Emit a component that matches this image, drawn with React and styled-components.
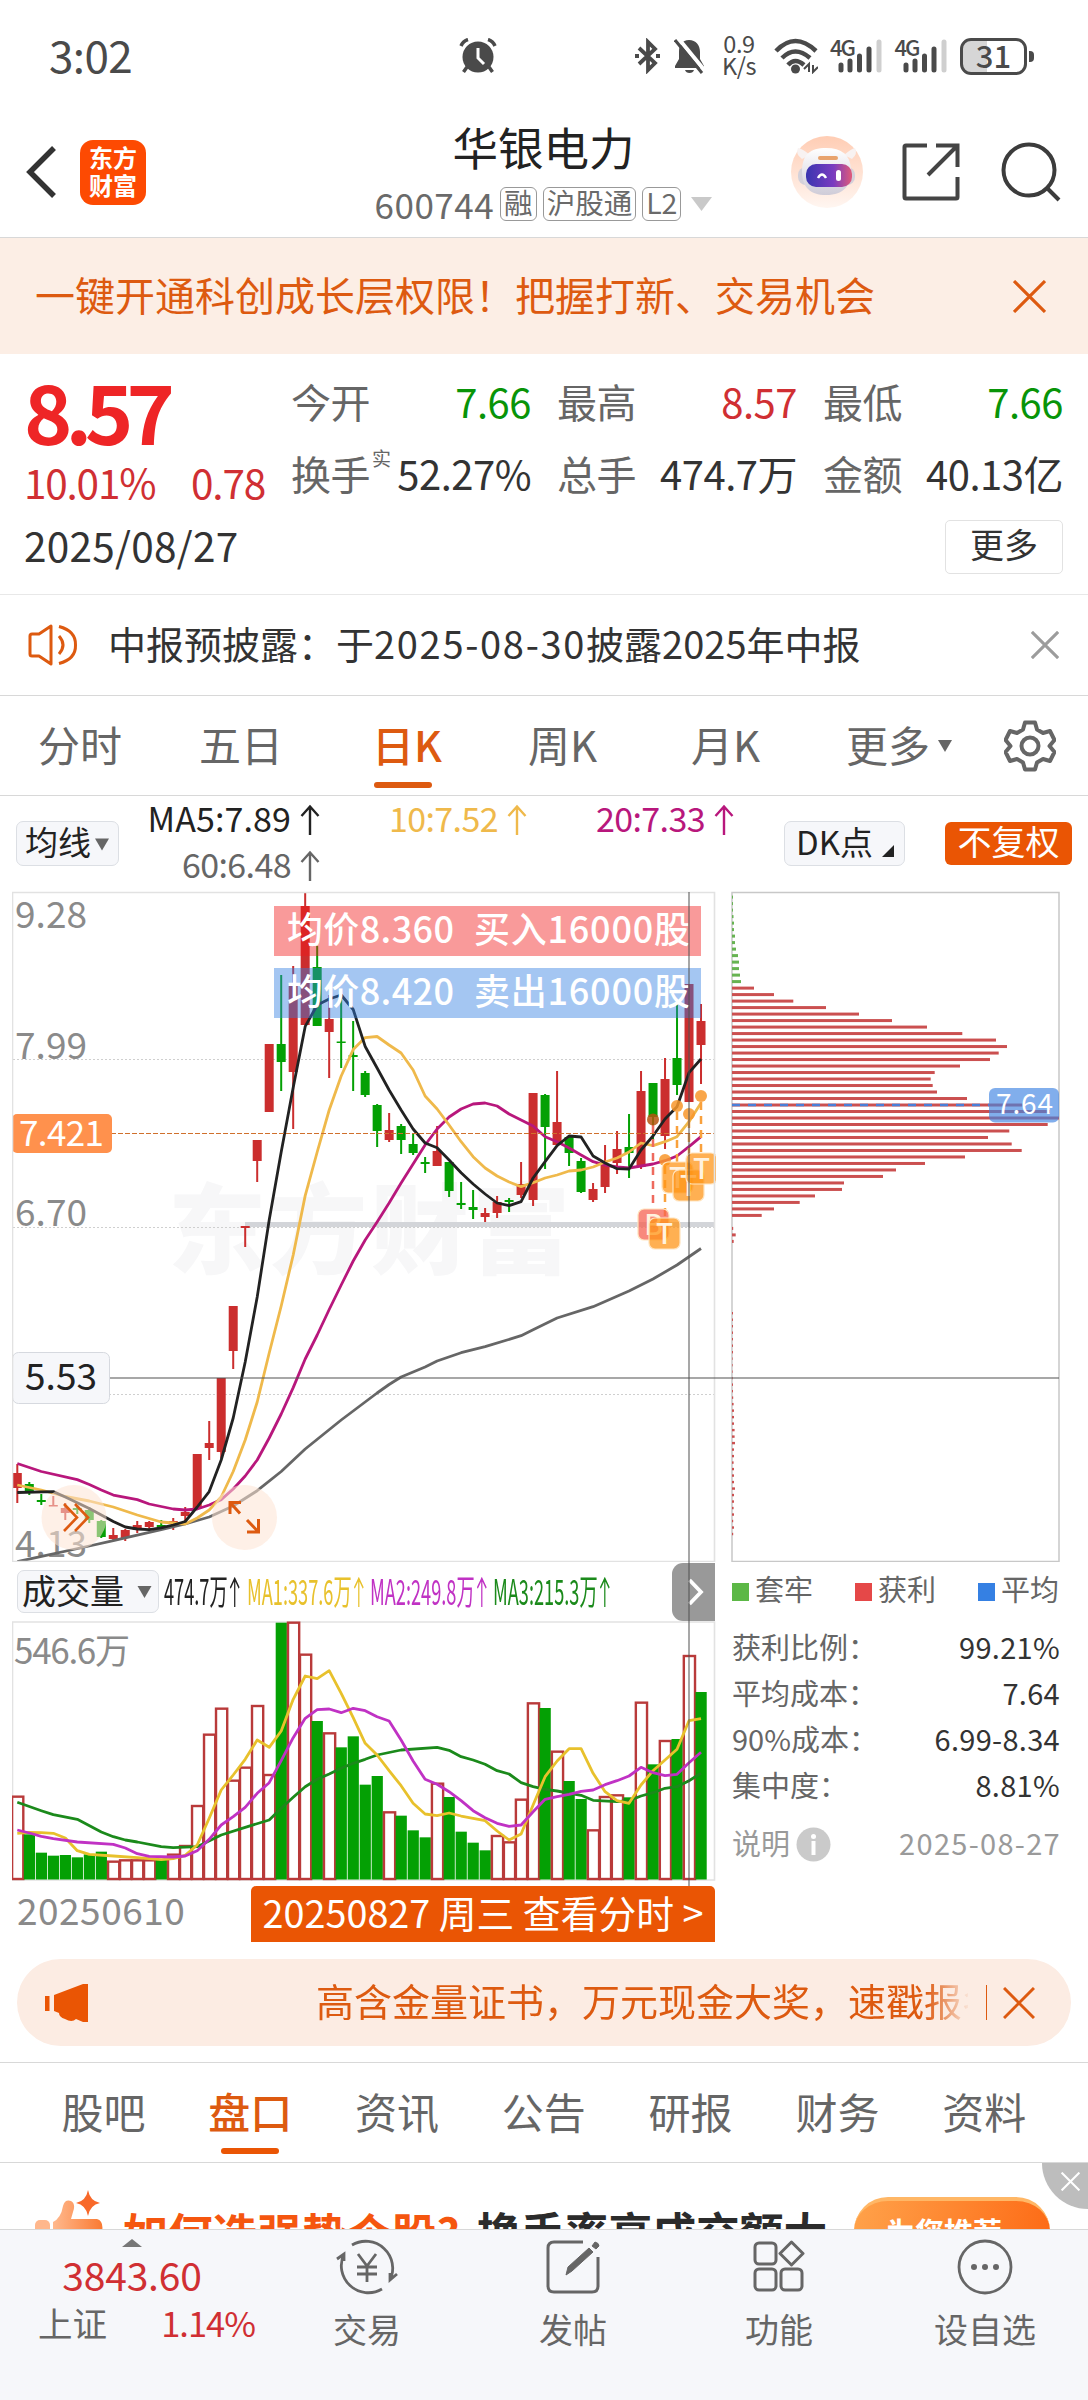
import React from 'react'
import styled, { createGlobalStyle } from 'styled-components'

const X0 = 17.3
const STEP = 11.995
const px = (i) => X0 + STEP * i

// [up/down, high, low, body top, body bottom]
const candles = [
  ['r', 1464, 1503, 1473, 1488], ['g', 1482, 1495, 1484, 1492], ['g', 1494, 1505, 1500, 1502], ['r', 1496, 1506, 1505, 1506.5],
  ['r', 1503, 1520, 1508, 1513], ['g', 1505, 1514, 1508, 1510], ['g', 1507, 1523, 1510, 1520], ['g', 1520, 1538, 1521, 1537],
  ['r', 1528, 1540, 1535, 1539], ['r', 1529, 1541, 1530, 1538], ['r', 1521, 1533, 1525, 1530], ['r', 1521, 1529, 1522, 1527],
  ['g', 1520, 1528, 1525, 1527], ['r', 1518, 1530, 1521, 1523], ['r', 1507, 1521, 1512, 1516], ['r', 1454, 1508, 1454, 1508],
  ['r', 1421, 1460, 1443, 1448], ['r', 1378, 1458, 1378, 1452], ['r', 1306, 1369, 1306, 1351], ['r', 1226, 1247, 1226, 1228],
  ['r', 1140, 1182, 1140, 1161], ['r', 1044, 1112, 1044, 1112], ['g', 975, 1091, 1044, 1062], ['r', 966, 1129, 984, 1072],
  ['r', 892, 1025, 906, 1025], ['g', 946, 1026, 967, 1026], ['r', 995, 1078, 1019, 1032], ['g', 997, 1068, 1041.5, 1043],
  ['g', 1021, 1091, 1055, 1057], ['g', 1071, 1097, 1073, 1095], ['g', 1104, 1147, 1105, 1131], ['r', 1113, 1142, 1130, 1140],
  ['g', 1124, 1154, 1126, 1140], ['g', 1133, 1155, 1144, 1153], ['g', 1157, 1173, 1162, 1164], ['r', 1126, 1166, 1151, 1166],
  ['g', 1162, 1197, 1162, 1191], ['g', 1182, 1209, 1203, 1205], ['g', 1190, 1219, 1207, 1210], ['r', 1208, 1222, 1213, 1217],
  ['r', 1196, 1218, 1202, 1213], ['g', 1198, 1212, 1200, 1202], ['r', 1162, 1198, 1184, 1195], ['r', 1093, 1206, 1093, 1200],
  ['g', 1094, 1169, 1095, 1127], ['r', 1071, 1146, 1122, 1145], ['g', 1137, 1166, 1137, 1153], ['g', 1158, 1193, 1161, 1192],
  ['r', 1183, 1202, 1189, 1200], ['r', 1145, 1193, 1164, 1187], ['r', 1131, 1174, 1149, 1163], ['g', 1114, 1178, 1147, 1153],
  ['r', 1071, 1169, 1091, 1167], ['g', 1083, 1140, 1083, 1117], ['r', 1058, 1149, 1079, 1136], ['g', 1004, 1095, 1058, 1085],
  ['r', 984, 1102, 984, 1102], ['r', 1004, 1084, 1021, 1045],
]

const ma5 = [[0, 1492.5], [3, 1491.6], [4, 1497], [6, 1508.6], [8, 1521.5], [9, 1527], [10, 1529], [11, 1529.6], [12, 1527.8], [13, 1525], [14, 1521.5], [15, 1507], [16, 1491.6], [17, 1460], [18, 1418], [19, 1362], [20, 1297], [21, 1220], [22, 1152], [23, 1087.6], [24, 1026.4], [25, 1005], [26, 999], [27, 995], [28, 1009.5], [29, 1046.5], [30, 1068], [31, 1090], [32, 1110], [33, 1129], [34, 1143], [35, 1147.7], [36, 1160], [37, 1172.7], [38, 1184], [39, 1194], [40, 1203], [41, 1205.7], [42, 1201.7], [43, 1178], [44, 1161.7], [45, 1145.7], [46, 1136], [47, 1137], [48, 1156], [49, 1163], [50, 1168.7], [51, 1169], [52, 1150], [53, 1136], [54, 1119], [55, 1106.7], [56, 1072.7], [57, 1059]]
const ma10 = [[0, 1485], [2, 1490], [4, 1496.5], [6, 1501], [8, 1507], [10, 1515], [12, 1522], [14, 1524], [15, 1518], [16, 1510], [17, 1497], [18, 1471.5], [19, 1440], [20, 1402], [21, 1353], [22, 1306], [23, 1255], [24, 1195.6], [25, 1152], [26, 1110], [27, 1076], [28, 1049.6], [29, 1037.6], [30, 1036.5], [31, 1045], [32, 1053], [33, 1070], [34, 1096], [35, 1109], [36, 1125], [37, 1141.7], [38, 1156.7], [39, 1168], [40, 1176], [41, 1182], [42, 1186.7], [43, 1182.7], [44, 1178], [45, 1175], [46, 1171], [47, 1170], [48, 1167], [49, 1162], [50, 1158], [51, 1152], [52, 1143], [53, 1145.7], [54, 1141.7], [55, 1136.7], [56, 1121.7], [57, 1103]]
const ma20 = [[0, 1463.5], [2, 1471.5], [5, 1479.6], [6, 1484.5], [7, 1490], [8, 1495], [10, 1499.6], [11, 1504], [13, 1509], [14, 1510], [15, 1509], [16, 1505], [17, 1499.6], [18, 1489], [19, 1476], [20, 1460], [21, 1438], [22, 1414], [23, 1387.6], [24, 1359], [25, 1335], [26, 1309.5], [27, 1285], [28, 1261], [29, 1240], [30, 1222], [31, 1203], [32, 1183], [33, 1164], [34, 1145], [35, 1129], [36, 1117], [37, 1109], [38, 1104], [39, 1103], [40, 1106], [41, 1114], [42, 1120], [43, 1126], [44, 1136.7], [45, 1141.7], [46, 1148], [47, 1155], [48, 1161.7], [49, 1165], [50, 1167], [51, 1168], [52, 1166], [53, 1164], [54, 1160.7], [55, 1156], [56, 1146.7], [57, 1136.7]]
const ma60 = [[0, 1561.7], [6, 1546], [8, 1540.7], [12, 1529.6], [14, 1524], [16, 1517], [18, 1506], [20, 1490.7], [22, 1471.5], [24, 1449], [27, 1420], [30, 1393], [31, 1384.5], [32, 1377], [34, 1367], [35, 1361], [37, 1352.7], [39, 1346.7], [42, 1335.7], [43, 1329.7], [45, 1318], [48, 1306.7], [51, 1291], [53, 1279], [55, 1265], [57, 1248.5]]

// bar tops measured from the top of the pane
const volumes = [
  ['r', 710], ['g', 823], ['g', 878], ['g', 887], ['g', 885], ['g', 892], ['g', 883], ['g', 875], ['r', 905], ['r', 901],
  ['r', 901], ['r', 901], ['g', 897], ['r', 884], ['r', 858], ['r', 738], ['r', 524], ['r', 446], ['r', 662], ['r', 623],
  ['r', 438], ['r', 645], ['g', 188], ['r', 188], ['r', 284], ['g', 483], ['r', 520], ['g', 562], ['g', 529], ['g', 674],
  ['g', 648], ['r', 757], ['g', 767], ['g', 811], ['g', 832], ['r', 671], ['g', 711], ['g', 815], ['g', 848], ['g', 871],
  ['r', 828], ['r', 847], ['r', 719], ['r', 430], ['g', 444], ['r', 575], ['g', 663], ['g', 717], ['r', 811], ['r', 711],
  ['r', 706], ['g', 712], ['r', 428], ['g', 613], ['r', 543], ['g', 537], ['r', 288], ['g', 396],
]
const vol1 = [[0, 820], [1, 817], [2, 818], [3, 820], [4, 834], [5, 872], [6, 883], [8, 888], [10, 893], [12, 899], [13, 896], [14, 886], [15, 855], [16, 775], [17, 690], [18, 645], [19, 598], [20, 540], [21, 562], [22, 513], [23, 418], [24, 348], [25, 356], [26, 332], [27, 400], [28, 473], [29, 550], [30, 585], [31, 632], [32, 677], [33, 730], [34, 762], [35, 767], [36, 759], [37, 768], [38, 775], [39, 782], [40, 813], [41, 840], [42, 822], [43, 735], [44, 650], [45, 603], [46, 566], [47, 566], [48, 640], [49, 695], [50, 722], [51, 730], [52, 675], [53, 632], [54, 600], [55, 568], [56, 482], [57, 476]]
const vol2 = [[0, 810], [1, 819], [2, 829], [3, 836], [5, 846], [8, 853], [9, 864], [10, 881], [11, 889], [13, 891], [14, 888], [15, 872], [16, 838], [17, 795], [18, 770], [19, 742], [20, 700], [21, 668], [22, 602], [23, 533], [24, 475], [25, 449], [26, 447], [27, 458], [28, 445], [29, 452], [30, 470], [31, 483], [32, 540], [33, 603], [34, 658], [35, 673], [36, 695], [37, 722], [38, 752], [39, 773], [40, 790], [41, 799], [42, 795], [43, 755], [44, 718], [45, 710], [46, 703], [47, 694], [48, 690], [49, 674], [50, 662], [51, 648], [52, 622], [53, 638], [54, 647], [55, 643], [56, 608], [57, 577]]
const vol3 = [[0, 727], [2, 752], [3, 764], [5, 778], [7, 816], [8, 830], [9, 840], [10, 846], [12, 860], [13, 863], [15, 860], [17, 825], [19, 802], [21, 780], [22, 745], [23, 712], [24, 680], [25, 658], [26, 642], [27, 625], [28, 610], [29, 598], [30, 585], [32, 570], [35, 562], [36, 571], [37, 590], [38, 600], [39, 613], [40, 632], [41, 642], [42, 668], [43, 680], [44, 688], [45, 693], [47, 706], [48, 721], [50, 725], [51, 722], [52, 708], [53, 698], [54, 685], [55, 680], [56, 662], [57, 640]]

const greenChips = [1, 1, 1, 1.5, 2, 2, 3, 3, 4, 6, 7, 7, 8, 9]
const redChips = [22, 42, 61.3, 94, 127, 160, 195, 230.3, 264, 275, 266.7, 258, 228, 202.7, 198.7, 200.7, 205, 235, 293, 318, 327, 315.7, 277.3, 256, 279.7, 289.7, 233, 193, 164, 151, 112, 110, 83, 67.7, 42, 29.7, 0, 1.2, 3.7, 1.7]
const tailChips = [1, 1, 1, 1, 1, 1, 1, 0.6, 0.6, 0.6, 0.6, 1, 1, 1.2, 1.6, 2, 2, 2, 2.6, 2.6, 3, 2, 2, 1.6, 2, 2, 2, 3, 2, 2, 1.6, 2, 1.2, 2, 1.2]

const line = (pts) => pts.map(([i, y]) => `${px(i).toFixed(1)},${y}`).join(' ')
const volY = (p) => 1560 + p / 3
const volLine = (pts) => line(pts.map(([i, p]) => [i, volY(p).toFixed(1)]))

const PriceChart = () => {
  return (
    <svg width="704" height="671" viewBox="12 891 704 671">
      <text x="168" y="1266" fontSize="98" fontWeight="900" textLength="402" fill="#f7f7f8">东方财富</text>
      <g stroke="#cfcfcf" strokeWidth="1" strokeDasharray="2 2">
        <path d="M13 1059.5H714M13 1227.5H714M13 1394.5H714" />
      </g>
      <g fill="#8a8a8a" fontSize="37">
        <text x="15" y="928" textLength="72">9.28</text>
        <text x="15" y="1059" textLength="72">7.99</text>
        <text x="15" y="1226" textLength="72">6.70</text>
        <text x="15" y="1557" textLength="72">4.13</text>
      </g>
      <rect x="245" y="1222" width="469" height="5" fill="#d3d5d9" />
      {candles.map(([c, h, l, t, b], i) => (
        <g key={i} fill={c === 'r' ? '#cb2e2e' : '#04a004'}>
          <rect x={px(i) - 1} y={h} width="2" height={l - h} />
          <rect x={px(i) - 4.5} y={t} width="9" height={b - t} />
        </g>
      ))}
      <g fill="none" strokeWidth="2.8" strokeLinejoin="round">
        <polyline points={line(ma60)} stroke="#666" />
        <polyline points={line(ma20)} stroke="#b8177c" />
        <polyline points={line(ma10)} stroke="#efb94b" />
        <polyline points={line(ma5)} stroke="#222" />
      </g>
      <path d="M13 1133.5H714" stroke="#d0702c" strokeDasharray="5 2" />
      <rect x="12" y="1114" width="100" height="39" rx="5" fill="#ff914d" />
      <text x="19" y="1146" fontSize="35" textLength="85" fill="#fff">7.421</text>
      <rect x="12.5" y="1352.5" width="97" height="51" rx="6" fill="#f6f7fa" stroke="#d6d9df" />
      <text x="25" y="1390" fontSize="37" textLength="72" fill="#222">5.53</text>
      <g>
        <rect x="274" y="906" width="427" height="50" fill="rgba(241,25,25,.44)" />
        <rect x="274" y="968" width="427" height="50" fill="rgba(48,125,225,.44)" />
        <g fill="#fff" fontSize="36" fontWeight="500">
          <text x="287" y="943" textLength="167">均价8.360</text>
          <text x="474" y="943" textLength="216">买入16000股</text>
          <text x="287" y="1005" textLength="167">均价8.420</text>
          <text x="474" y="1005" textLength="216">卖出16000股</text>
        </g>
      </g>
      <g fill="none" strokeWidth="2.5" strokeDasharray="8 6">
        <path d="M653 1125V1208" stroke="#ee6a5e" />
        <path d="M665 1166V1217M677 1112V1162M689 1120V1170M701 1102V1152" stroke="#f9a13c" />
      </g>
      <g fill="#f8962a" fillOpacity=".85">
        <circle cx="653" cy="1119.5" r="6" fill="#b5540f" />
        <circle cx="665" cy="1160" r="6" />
        <circle cx="677" cy="1106" r="6" />
        <circle cx="689" cy="1114" r="6" />
        <circle cx="701" cy="1096" r="6" />
      </g>
      <Mark x={638} y={1209} c="#f5604f" t="B" />
      <Mark x={649} y={1218} c="#ff9416" t="T" />
      <Mark x={662} y={1162} c="#ff9416" t="T" />
      <Mark x={673} y={1170} c="#ff9416" t="T" />
      <Mark x={686} y={1153} c="#ff9416" t="T" />
      <g fill="#fde3d4" fillOpacity=".55">
        <circle cx="74" cy="1517.5" r="32.5" />
        <circle cx="244.5" cy="1517.5" r="32.5" />
      </g>
      <g fill="none" stroke="#dd5a10" strokeWidth="2.6">
        <path d="M64 1504L77 1517.5L64 1531M75 1504L88 1517.5L75 1531" />
        <path d="M241 1502.5H230V1514M231 1503.5L240 1513.5M247 1520L257.5 1531M247 1532H258.5V1519" strokeWidth="3" />
      </g>
      <path d="M12.5 892.5H714.5V1561.5H12.5Z" fill="none" stroke="#e2e2e2" strokeWidth="1.6" />
    </svg>
  )
}

const Mark = ({ x, y, c, t }) => (
  <g>
    <rect x={x} y={y} width="31" height="31" rx="6" fill={c} fillOpacity=".74" stroke="#ffe3bd" strokeWidth="1.2" />
    <text x={x + 15.5} y={y + 26} fontSize="28" fontWeight="500" fill="#fff2df" textAnchor="middle">{t}</text>
  </g>
)

const VolumeChart = () => {
  return (
    <svg width="704" height="260" viewBox="12 1621 704 260">
      <path d="M12.5 1622H714.5V1880H12.5Z" fill="none" stroke="#e2e2e2" strokeWidth="1.6" />
      <text x="14" y="1664" fontSize="35" textLength="116" fill="#8a8a8a">546.6万</text>
      {volumes.map(([c, p], i) =>
        c === 'g' ? (
          <rect key={i} x={px(i) - 5.5} y={volY(p)} width="11.2" height={1879.5 - volY(p)} fill="#04a004" />
        ) : (
          <rect key={i} x={px(i) - 5.2} y={volY(p)} width="11.2" height={1879 - volY(p)} fill="#fff" stroke="#b93a3a" strokeWidth="2.4" />
        )
      )}
      <g fill="none" strokeWidth="2.8" strokeLinejoin="round">
        <polyline points={volLine(vol3)} stroke="#1b8a1b" />
        <polyline points={volLine(vol1)} stroke="#e8c12c" />
        <polyline points={volLine(vol2)} stroke="#c032c4" />
      </g>
    </svg>
  )
}

const ChipChart = () => {
  return (
    <svg width="330" height="671" viewBox="731 891 330 671">
      <path d="M732 892.5H1059V1561.5H732Z" fill="none" stroke="#c8c8c8" strokeWidth="1.5" />
      <g fill="#67b352">
        {greenChips.map((w, i) => <rect key={i} x="732" y={895.6 + i * 6.5} width={w} height="3" />)}
      </g>
      <g fill="#cb5050">
        {redChips.map((w, i) => <rect key={i} x="732" y={986.6 + i * 6.495} width={w} height="3" />)}
        {tailChips.map((w, i) => <rect key={i} x="732" y={1312 + i * 6.495} width={w} height="2.4" />)}
      </g>
      <path d="M732 1105H989" stroke="#4a7fd8" strokeWidth="2.4" strokeDasharray="8 8" />
      <rect x="989" y="1088" width="70" height="34.5" rx="6" fill="rgba(64,132,226,.66)" />
      <text x="996" y="1114" fontSize="28" textLength="57" fill="#fff">7.64</text>
    </svg>
  )
}

const Cross = ({ size, color, w = 3 }) => (
  <svg width={size} height={size} viewBox="0 0 32 32" fill="none" stroke={color} strokeWidth={w}>
    <path d="M1 1L31 31M31 1L1 31" />
  </svg>
)

const Arrow = () => (
  <svg width="20" height="32" viewBox="0 0 20 32" fill="none" stroke="currentColor" strokeWidth="2.4">
    <path d="M10 31V3M1.5 12L10 2.5L18.5 12" />
  </svg>
)

const Tri = ({ w = 14, h = 12 }) => (
  <svg width={w} height={h} viewBox="0 0 14 12"><path d="M0 0H14L7 12Z" fill="#666" /></svg>
)

const Signal = () => (
  <SignalBox>
    <svg width="51" height="36" viewBox="0 0 51 36">
      <g strokeWidth="5" strokeLinecap="round" stroke="#4a4a4a">
        <path d="M10 27V32M19 23V32M28.5 18V32M38 11V32" />
        <path d="M48 4V32" stroke="#cfcfcf" />
      </g>
    </svg>
    <b>4G</b>
  </SignalBox>
)

const StatusBar = () => (
  <Status>
    <Time>3:02</Time>
    <svg width="38" height="36" viewBox="0 0 38 36">
      <circle cx="19" cy="19" r="15.5" fill="#4a4a4a" />
      <path d="M2 8Q4 3 9 1.5M36 8Q34 3 29 1.5M8 29L4.5 34M30 29L33.5 34" stroke="#4a4a4a" strokeWidth="3.5" fill="none" />
      <path d="M19 10V20L25 26" stroke="#fff" strokeWidth="3" fill="none" />
    </svg>
    <StatusRight>
      <svg width="25" height="36" viewBox="0 0 25 36" fill="none" stroke="#4a4a4a" strokeWidth="3.8">
        <path d="M4 10L20 25L13 32V4L20 11L4 26" />
        <path d="M0 18H4M21 18H25" />
      </svg>
      <svg width="31" height="36" viewBox="0 0 31 36">
        <path d="M15 2C22 2 26 7 26 14V21L30 28V30H1V28L5 21V14C5 7 8 2 15 2Z" fill="#4a4a4a" />
        <path d="M11 32H20Q19 35 15.5 35Q12 35 11 32Z" fill="#4a4a4a" />
        <path d="M4 0L31 33" stroke="#fff" strokeWidth="4" />
        <path d="M1 2L28 35" stroke="#4a4a4a" strokeWidth="3" />
      </svg>
      <Speed><span>0.9</span><span>K/s</span></Speed>
      <svg width="44" height="36" viewBox="0 0 44 36" fill="none" stroke="#4a4a4a" strokeWidth="4.5">
        <path d="M2 13Q21 -7 42 13M8 20Q21 7 36 20M14 27Q21 19 30 27" />
        <circle cx="21.5" cy="31" r="4.5" fill="#4a4a4a" stroke="none" />
        <path d="M30 31L35 26V34M44 29L39 34V27" strokeWidth="2" />
      </svg>
      <Signal />
      <Signal />
      <Battery><i>31</i></Battery>
    </StatusRight>
  </Status>
)

const TitleBar = () => (
  <Header>
    <HeaderSide>
      <svg width="30" height="52" viewBox="0 0 30 52" fill="none" stroke="#333" strokeWidth="5.5"><path d="M28 2L4 26L28 50" /></svg>
      <Logo><span>东方</span><span>财富</span></Logo>
    </HeaderSide>
    <TitleBlock>
      <h1>华银电力</h1>
      <CodeRow>
        600744<em>融</em><em>沪股通</em><em>L2</em>
        <svg width="21" height="14" viewBox="0 0 21 14"><path d="M0 0H21L10.5 14Z" fill="#c9c9c9" /></svg>
      </CodeRow>
    </TitleBlock>
    <HeaderSide $end>
      <svg width="74" height="74" viewBox="0 0 74 74">
        <defs>
          <linearGradient id="halo" x1="0" y1="0" x2="0" y2="1"><stop offset="0" stopColor="#ffcdb4" /><stop offset="1" stopColor="#fff6f1" /></linearGradient>
          <linearGradient id="visor" x1="0" y1="0" x2="1" y2="0"><stop offset="0" stopColor="#3a35b0" /><stop offset=".6" stopColor="#7a3cc0" /><stop offset="1" stopColor="#e05a78" /></linearGradient>
          <linearGradient id="shell" x1="0" y1="0" x2="0" y2="1"><stop offset="0" stopColor="#fff" /><stop offset="1" stopColor="#cfccd8" /></linearGradient>
        </defs>
        <circle cx="37" cy="37" r="36" fill="url(#halo)" />
        <path d="M12 24Q5 19 8 13Q13 14 20 20M54 20Q61 14 65 13Q68 19 62 24" fill="#f8f2f1" />
        <rect x="8" y="32" width="57" height="18" rx="8" fill="#d4d1da" />
        <path d="M36 13C52 13 60 20 61 34C62 50 54 60 36 60C20 60 12 52 12 36C12 20 20 13 36 13Z" fill="url(#shell)" />
        <rect x="28" y="21" width="20" height="4" rx="2" fill="#e8a36d" />
        <rect x="16" y="29" width="46" height="23" rx="10" fill="url(#visor)" />
        <path d="M28 43Q32 36 36 43" stroke="#fff" strokeWidth="2.5" fill="none" />
        <rect x="46" y="35" width="5" height="11" rx="2.5" fill="#fff" />
      </svg>
      <svg width="58" height="58" viewBox="0 0 58 58" fill="none" stroke="#444" strokeWidth="4">
        <path d="M25 2.5H4Q2.5 2.5 2.5 4V54Q2.5 55.5 4 55.5H54Q55.5 55.5 55.5 54V34" />
        <path d="M34 2.5H55.5V24M55 3L26 32" />
      </svg>
      <svg width="60" height="60" viewBox="0 0 60 60" fill="none" stroke="#3c3c3c" strokeWidth="4">
        <circle cx="28" cy="28" r="25.5" /><path d="M46 46L58 58" />
      </svg>
    </HeaderSide>
  </Header>
)

const stats = [
  ['今开', '7.66', '#089408'], ['最高', '8.57', '#d02f33'], ['最低', '7.66', '#089408'],
  ['换手', '52.27%'], ['总手', '474.7万'], ['金额', '40.13亿'],
]

const chipRows = [['获利比例：', '99.21%'], ['平均成本：', '7.64'], ['90%成本：', '6.99-8.34'], ['集中度：', '8.81%']]

const infoTabs = ['股吧', '盘口', '资讯', '公告', '研报', '财务', '资料']

const App = () => {
  return (
    <Page>
      <Global />
      <StatusBar />
      <TitleBar />
      <Banner>
        <span>一键开通科创成长层权限！把握打新、交易机会</span>
        <Cross size={33} color="#dd5a10" w={3} />
      </Banner>

      <Quote>
        <QuoteTop>
          <PriceBlock>
            <strong>8.57</strong>
            <div><span>10.01%</span><span>0.78</span></div>
          </PriceBlock>
          <Stats>
            {stats.map(([k, v, c], i) => (
              <Stat key={i} $color={c}>
                <label>{k}{k === '换手' && <sup>实</sup>}</label>
                <span>{v}</span>
              </Stat>
            ))}
          </Stats>
        </QuoteTop>
        <DateRow>
          <span>2025/08/27</span>
          <MoreButton>更多</MoreButton>
        </DateRow>
      </Quote>

      <Notice>
        <svg width="50" height="42" viewBox="0 0 50 42" fill="none" stroke="#dd5a10" strokeWidth="3" strokeLinejoin="round">
          <path d="M2 12Q2 10 4 10H11L23 2V40L11 32H4Q2 32 2 30Z" />
          <path d="M31 12Q39 21 31 30M31 2.5Q48 7 47.5 21Q48 35 31 39.5" />
        </svg>
        <span>中报预披露：于<b>2025-08-30</b>披露2025年中报</span>
        <Cross size={28} color="#9c9c9c" w={3.5} />
      </Notice>

      <PeriodTabs>
        <Period $w={161}>分时</Period>
        <Period $w={161}>五日</Period>
        <Period $w={168} $on>日K</Period>
        <Period $w={163}>周K</Period>
        <Period $w={155}>月K</Period>
        <Period $w={158}>更多<Tri /></Period>
        <svg width="52" height="52" viewBox="0 0 52 52" fill="none" stroke="#666" strokeWidth="4" strokeLinejoin="round">
          <path d="M21 2.5H31L33 9.5L39 13L46 11L50.5 20L45.5 26L50.5 32L46 41L39 39L33 42.5L31 49.5H21L19 42.5L13 39L6 41L1.5 32L6.5 26L1.5 20L6 11L13 13L19 9.5Z" />
          <circle cx="26" cy="26" r="8.5" />
        </svg>
      </PeriodTabs>

      <MaBar>
        <Pill $w={103}>均线<Tri w={14} h={13} /></Pill>
        <MaGrid>
          <Ma $c="#222" $ls={0.1}><span>MA5:7.89</span><Arrow /></Ma>
          <Ma $c="#efb94b"><span>10:7.52</span><Arrow /></Ma>
          <Ma $c="#b8177c"><span>20:7.33</span><Arrow /></Ma>
          <Ma $c="#666"><span>60:6.48</span><Arrow /></Ma>
        </MaGrid>
        <Pill $w={121} $dk>DK点<svg width="12" height="12" viewBox="0 0 12 12"><path d="M12 0V12H0Z" fill="#222" /></svg></Pill>
        <Adjust>不复权</Adjust>
      </MaBar>

      <Charts>
        <LeftPane>
          <PriceChart />
          <VolHead>
            <Pill $w={142} $vol>成交量<Tri w={15} h={12} /></Pill>
            <Narrow $w={75} $c="#222"><span>474.7万<Arrow /></span></Narrow>
            <Narrow $w={115} $c="#e8c12c"><span>MA1:337.6万<Arrow /></span></Narrow>
            <Narrow $w={115} $c="#c032c4"><span>MA2:249.8万<Arrow /></span></Narrow>
            <Narrow $w={115} $c="#1b8a1b"><span>MA3:215.3万<Arrow /></span></Narrow>
            <NextButton>
              <svg width="16" height="28" viewBox="0 0 16 28" fill="none" stroke="#fff" strokeWidth="3.8"><path d="M1.5 2L13 14L1.5 26" /></svg>
            </NextButton>
          </VolHead>
          <VolumeChart />
          <DayRow>
            <span>20250610</span>
            <DayLink>20250827 周三 查看分时 &gt;</DayLink>
          </DayRow>
        </LeftPane>
        <RightPane>
          <ChipChart />
          <Legend>
            <Key $c="#5cb846">套牢</Key>
            <Key $c="#e54848">获利</Key>
            <Key $c="#3580e3">平均</Key>
          </Legend>
          {chipRows.map(([k, v]) => (
            <ChipRow key={k}><span>{k}</span><b>{v}</b></ChipRow>
          ))}
          <ChipNote>
            <span>说明</span>
            <svg width="35" height="35" viewBox="0 0 35 35"><circle cx="17.5" cy="17.5" r="17" fill="#cacaca" /><path d="M17.5 14V28" stroke="#fff" strokeWidth="4" /><circle cx="17.5" cy="9.5" r="2.5" fill="#fff" /></svg>
            <time>2025-08-27</time>
          </ChipNote>
        </RightPane>
        <CrossV />
        <CrossH />
      </Charts>

      <PromoWrap>
        <Promo>
          <svg width="45" height="40" viewBox="0 0 45 40" fill="#ea5504">
            <path d="M0 13H4.5V28H0ZM9 12L38 1H43V39H38L31 36Q27 40 20 36Q14 34 14 30L9 28Z" />
          </svg>
          <span>高含金量证书，万元现金大奖，速戳报名</span>
          <i />
          <Cross size={32} color="#dd5a10" w={3} />
        </Promo>
      </PromoWrap>

      <InfoTabs>
        {infoTabs.map((t, i) => <InfoTab key={t} $on={i === 1}>{t}</InfoTab>)}
      </InfoTabs>

      <Ad>
        <svg width="70" height="42" viewBox="0 0 70 42">
          <defs><linearGradient id="thumb" x1="0" y1="0" x2="1" y2="0"><stop offset="0" stopColor="#ffb98e" /><stop offset="1" stopColor="#fa7a32" /></linearGradient></defs>
          <path d="M18 42V32Q26 28 28 16Q30 9 36 11Q41 14 38 22L36 29H62Q69 31 67 42Z" fill="url(#thumb)" />
          <rect x="0" y="30" width="15" height="14" rx="5" fill="#ffb78c" />
          <path d="M53 0Q55 11 65 13Q55 15 53 26Q51 15 41 13Q51 11 53 0Z" fill="#f8692a" />
        </svg>
        <AdText $c="#f5560f" $s={44.8}>如何选强势个股?</AdText>
        <AdText $c="#2b2b2b" $s={43.8}>换手率高成交额大</AdText>
        <AdButton>为您推荐 ›</AdButton>
        <AdClose><Cross size={19} color="#fff" w={3.5} /></AdClose>
      </Ad>

      <BottomBar>
        <IndexBox>
          <svg width="20" height="8" viewBox="0 0 20 8"><path d="M0 8L10 0L20 8Z" fill="#777" /></svg>
          <b>3843.60</b>
          <div><span>上证</span><em>1.14%</em></div>
        </IndexBox>
        <NavItem>
          <svg width="62" height="56" viewBox="0 0 62 56" fill="none" stroke="#666" strokeWidth="2.8">
            <path d="M16 6A27 27 0 0 1 54 41M54 34V41L61 35" />
            <path d="M46 50A27 27 0 0 1 8 15M8 22V15L1 20" />
            <path d="M22 15L31 27L40 15M31 27V43M21 28H41M21 35H41" />
          </svg>
          <span>交易</span>
        </NavItem>
        <NavItem>
          <svg width="54" height="56" viewBox="0 0 54 56" fill="none" stroke="#666" strokeWidth="3">
            <path d="M37 3H8Q2 3 2 9V47Q2 53 8 53H46Q52 53 52 47V18" />
            <path d="M20 36L22 28L43 9L47 13L26 32Z" fill="#666" strokeWidth="1" />
            <path d="M46 7L49 3Q53 4 53 7L50 10Z" fill="#666" strokeWidth="1" />
          </svg>
          <span>发帖</span>
        </NavItem>
        <NavItem>
          <svg width="52" height="56" viewBox="0 0 52 56" fill="none" stroke="#666" strokeWidth="3">
            <rect x="2" y="4" width="21" height="21" rx="4" /><rect x="2" y="30" width="21" height="21" rx="4" /><rect x="28" y="30" width="21" height="21" rx="4" />
            <path d="M38.5 3L50 14.5L38.5 26L27 14.5Z" strokeLinejoin="round" />
          </svg>
          <span>功能</span>
        </NavItem>
        <NavItem>
          <svg width="56" height="56" viewBox="0 0 56 56">
            <circle cx="28" cy="28" r="26" fill="none" stroke="#666" strokeWidth="2.8" />
            <g fill="#666"><circle cx="17" cy="28" r="3" /><circle cx="28" cy="28" r="3" /><circle cx="39" cy="28" r="3" /></g>
          </svg>
          <span>设自选</span>
        </NavItem>
      </BottomBar>
    </Page>
  )
}

export default App

const Global = createGlobalStyle`
*{
  box-sizing: border-box;
}
body{
  margin: 0;
  background: #fff;
}
h1, b, em, i, label{
  font-weight: 400;
  font-style: normal;
  margin: 0;
}
svg{
  display: block;
  flex-shrink: 0;
}
`
const Page = styled.div`
width: 1088px;
height: 2400px;
overflow: hidden;
display: flex;
flex-direction: column;
font-family: "Noto Sans CJK SC", "Noto Sans", sans-serif;
line-height: 1;
white-space: nowrap;
color: #333;
background: #fff;
`
const Status = styled.div`
height: 112px;
padding: 0 54px 0 49px;
display: flex;
align-items: center;
color: #4a4a4a;
`
const Time = styled.div`
width: 410px;
font-size: 44px;
letter-spacing: -0.6px;
padding-bottom: 4px;
`
const StatusRight = styled.div`
margin-left: auto;
display: flex;
align-items: center;
gap: 13.5px;
`
const Speed = styled.div`
width: 38px;
margin: 0 2px 0 2px;
display: flex;
flex-direction: column;
align-items: center;
font-size: 23.5px;
line-height: 22px;
padding-bottom: 4px;
span{
  letter-spacing: -0.4px;
}
`
const SignalBox = styled.div`
position: relative;
b{
  position: absolute;
  left: -1px;
  top: -3px;
  font-size: 22px;
  letter-spacing: -2px;
  font-weight: 500;
}
`
const Battery = styled.div`
position: relative;
width: 67px;
height: 37px;
margin-right: 7px;
border: 3px solid #4a4a4a;
border-radius: 11px;
display: flex;
justify-content: center;
background: linear-gradient(90deg, #d6d6d6 24px, #fff 24px);
i{
  font-size: 31px;
  font-weight: 500;
  line-height: 27px;
}
&::after{
  content: '';
  position: absolute;
  right: -10px;
  top: 10px;
  width: 5px;
  height: 11px;
  border-radius: 0 4px 4px 0;
  background: #4a4a4a;
}
`
const Header = styled.div`
height: 126px;
padding: 0 27px 0 26px;
display: grid;
grid-template-columns: 1fr auto 1fr;
border-bottom: 1px solid #d8d8d8;
`
const HeaderSide = styled.div`
display: flex;
align-items: center;
gap: ${(p) => (p.$end ? '41px' : '24px')};
justify-content: ${(p) => (p.$end ? 'flex-end' : 'flex-start')};
padding-bottom: 5px;
svg:first-child{
  margin-right: ${(p) => (p.$end ? '-3px' : '0')};
}
`
const Logo = styled.div`
width: 66px;
height: 65px;
border-radius: 13px;
background: #fd4a02;
color: #fff;
display: flex;
flex-direction: column;
align-items: center;
justify-content: center;
font-size: 24px;
font-weight: 700;
line-height: 28px;
padding-bottom: 3px;
`
const TitleBlock = styled.div`
display: flex;
flex-direction: column;
align-items: center;
h1{
  font-size: 45.5px;
  margin-top: 12px;
  color: #222;
}
`
const CodeRow = styled.div`
display: flex;
align-items: center;
margin-top: 16px;
height: 36px;
font-size: 35px;
letter-spacing: 0.5px;
color: #6a6a6a;
em{
  height: 34px;
  margin-left: 6px;
  padding: 0 3px;
  border: 1.5px solid #999;
  border-radius: 6px;
  font-size: 28.5px;
  line-height: 28px;
  letter-spacing: 0;
}
svg{
  margin-left: 10px;
}
`
const Banner = styled.div`
height: 116px;
padding: 0 42px 0 35px;
display: flex;
align-items: center;
justify-content: space-between;
background: #fceee5;
color: #dd5a10;
font-size: 40px;
span{
  padding-bottom: 4px;
}
`
const Quote = styled.div`
height: 241px;
border-bottom: 1px solid #e8e8e8;
padding: 20px 25px 0 24px;
`
const QuoteTop = styled.div`
display: flex;
height: 146px;
`
const PriceBlock = styled.div`
width: 267px;
color: #d02f33;
strong{
  display: block;
  font-size: 82px;
  font-weight: 700;
  letter-spacing: -7px;
  line-height: 82px;
  margin-top: -5px;
  color: #ee2526;
}
div{
  display: flex;
  justify-content: space-between;
  width: 241px;
  margin-top: 11px;
  font-size: 40.5px;
  letter-spacing: -1.2px;
}
`
const Stats = styled.div`
display: grid;
grid-template-columns: 240px 240px 240px;
column-gap: 26px;
grid-auto-rows: 72px;
`
const Stat = styled.div`
display: flex;
justify-content: space-between;
align-items: center;
padding-bottom: 19px;
font-size: 40px;
letter-spacing: -0.5px;
color: ${(p) => p.$color || '#333'};
label{
  display: flex;
  color: #666;
}
sup{
  font-size: 19px;
  line-height: 1;
  margin: -5px -12px 0 2px;
}
`
const DateRow = styled.div`
display: flex;
justify-content: space-between;
align-items: center;
font-size: 40.5px;
height: 53px;
letter-spacing: 0.3px;
span{
  padding-bottom: 3px;
}
`
const MoreButton = styled.button`
width: 118px;
height: 54px;
border: 1.5px solid #e2e2e2;
border-radius: 5px;
background: #fff;
font-family: inherit;
font-size: 34px;
line-height: 1;
color: #333;
padding: 0 0 5px;
`
const Notice = styled.div`
height: 101px;
padding: 0 29px 0 28px;
display: flex;
align-items: center;
border-bottom: 1px solid #d8d8d8;
font-size: 38px;
span{
  margin: 0 auto 4px 30px;
}
b{
  letter-spacing: 1.7px;
}
`
const PeriodTabs = styled.div`
height: 100px;
padding-left: 38px;
display: flex;
align-items: center;
border-bottom: 1px solid #d8d8d8;
color: #666;
`
const Period = styled.div`
position: relative;
width: ${(p) => p.$w}px;
height: 99px;
display: flex;
align-items: center;
font-size: 42px;
padding-bottom: 4px;
color: ${(p) => (p.$on ? '#dd5a10' : 'inherit')};
font-weight: ${(p) => (p.$on ? 500 : 400)};
padding-left: ${(p) => (p.$on ? '12px' : '0')};
svg{
  margin: 4px 0 0 8px;
}
&::after{
  content: '';
  display: ${(p) => (p.$on ? 'block' : 'none')};
  position: absolute;
  left: 14px;
  bottom: 7px;
  width: 58px;
  height: 6px;
  border-radius: 3px;
  background: #dd5a10;
}
`
const MaBar = styled.div`
height: 95px;
padding: 0 16px;
display: flex;
align-items: center;
`
const Pill = styled.div`
width: ${(p) => p.$w}px;
height: ${(p) => (p.$vol ? 43 : 45)}px;
border: 1px solid #dcdfe4;
border-radius: 7px;
background: #f6f7fa;
display: flex;
align-items: center;
padding-left: ${(p) => (p.$vol ? 4 : p.$dk ? 11 : 8)}px;
padding-bottom: 4px;
font-size: ${(p) => (p.$vol ? 34 : 33)}px;
color: #222;
svg{
  margin: ${(p) => (p.$dk ? '18px 0 0 9px' : p.$vol ? '4px 0 0 13px' : '5px 0 0 4px')};
}
`
const MaGrid = styled.div`
width: 615px;
display: grid;
grid-template-columns: 201px 207px 207px;
row-gap: 8px;
margin-right: 50px;
margin-top: -1px;
`
const Ma = styled.div`
display: flex;
justify-content: flex-end;
align-items: center;
gap: 9px;
font-size: 34px;
letter-spacing: ${(p) => p.$ls || -0.6}px;
color: ${(p) => p.$c};
span{
  padding-bottom: 4px;
}
`
const Adjust = styled.div`
width: 127px;
height: 43px;
margin-left: auto;
border-radius: 6px;
background: #ea5504;
color: #fff;
font-size: 34px;
line-height: 38px;
text-align: center;
`
const Charts = styled.div`
position: relative;
display: flex;
gap: 15px;
height: 1059px;
padding-left: 12px;
`
const CrossV = styled.div`
position: absolute;
left: 688px;
top: 1px;
width: 2px;
height: 994px;
background: rgba(80, 80, 80, 0.5);
`
const CrossH = styled.div`
position: absolute;
left: 110px;
top: 486px;
width: 949px;
height: 2px;
background: rgba(80, 80, 80, 0.5);
`
const LeftPane = styled.div`
width: 704px;
`
const VolHead = styled.div`
height: 59px;
padding-left: 5px;
display: flex;
align-items: center;
position: relative;
`
const Narrow = styled.div`
width: ${(p) => p.$w}px;
margin-left: ${(p) => (p.$w < 100 ? 5 : 8)}px;
color: ${(p) => p.$c};
font-size: 35px;
span{
  display: inline-flex;
  align-items: center;
  padding-bottom: 4px;
  transform: scaleX(0.52);
  transform-origin: left center;
}
svg{
  margin: 4px 0 0 4px;
}
`
const NextButton = styled.div`
width: 43px;
height: 58px;
margin-left: auto;
margin-right: 1px;
border-radius: 11px 0 0 11px;
background: #999;
display: flex;
align-items: center;
padding-left: 16px;
`
const DayRow = styled.div`
display: flex;
justify-content: space-between;
padding: 5px 1px 0 5px;
font-size: 37px;
color: #8a8a8a;
span{
  padding-top: 5px;
  letter-spacing: 0.5px;
}
`
const DayLink = styled.div`
width: 464px;
height: 56px;
border-radius: 5px 5px 0 0;
background: #ea5504;
color: #fff;
font-size: 37.8px;
line-height: 51px;
text-align: center;
`
const RightPane = styled.div`
width: 330px;
color: #666;
`
const Legend = styled.div`
display: flex;
justify-content: space-between;
padding: 12px 2px 0 1px;
height: 63px;
`
const Key = styled.div`
display: flex;
align-items: flex-start;
gap: 6px;
font-size: 29px;
&::before{
  content: '';
  width: 17px;
  height: 18px;
  margin-top: 9px;
  background: ${(p) => p.$c};
}
`
const ChipRow = styled.div`
display: flex;
justify-content: space-between;
height: 46px;
padding: 7px 1px 0 1px;
font-size: 29px;
b{
  color: #333;
  letter-spacing: 0.3px;
}
`
const ChipNote = styled.div`
display: flex;
align-items: center;
height: 54px;
margin-top: 8px;
padding: 0 0 0 1px;
font-size: 29px;
color: #9a9a9a;
svg{
  margin-left: 6px;
}
span, time{
  padding-bottom: 4px;
}
time{
  margin-left: auto;
  letter-spacing: 1.3px;
}
`
const PromoWrap = styled.div`
height: 113px;
padding: 9px 17px 0;
border-bottom: 1px solid #d8d8d8;
`
const Promo = styled.div`
height: 87px;
border-radius: 44px;
background: #fcece3;
display: flex;
align-items: center;
padding: 0 36px 0 28px;
color: #dd5a10;
span{
  width: 652px;
  margin-left: 226px;
  margin-bottom: 2px;
  height: 48px;
  line-height: 44px;
  overflow: hidden;
  font-size: 38px;
  mask-image: linear-gradient(90deg, #000 610px, transparent 655px);
}
i{
  width: 1.5px;
  height: 35px;
  margin-left: auto;
  margin-right: 16px;
  background: #dd5a10;
}
`
const InfoTabs = styled.div`
height: 100px;
padding: 0 30px;
display: grid;
grid-template-columns: repeat(7, 146.8px);
border-bottom: 1px solid #d8d8d8;
`
const InfoTab = styled.div`
position: relative;
display: flex;
justify-content: center;
align-items: center;
padding-bottom: 4px;
font-size: 42px;
color: ${(p) => (p.$on ? '#dd5a10' : '#666')};
font-weight: ${(p) => (p.$on ? 500 : 400)};
&::after{
  content: '';
  display: ${(p) => (p.$on ? 'block' : 'none')};
  position: absolute;
  bottom: 8px;
  width: 58px;
  height: 6px;
  border-radius: 3px;
  background: #ea5504;
}
`
const Ad = styled.div`
position: relative;
height: 67px;
padding: 27px 38px 0 35px;
display: flex;
overflow: hidden;
border-bottom: 1px solid #d8d8d8;
`
const AdText = styled.div`
width: 336px;
margin-left: 18px;
margin-top: 20px;
font-size: ${(p) => p.$s}px;
font-weight: 700;
color: ${(p) => p.$c};
`
const AdButton = styled.div`
width: 196px;
height: 70px;
margin: 7px 0 0 auto;
border-radius: 34px;
border-top: 4px solid #ffb766;
background: linear-gradient(100deg, #ffa24a, #fd6a15);
color: #fff;
text-align: center;
font-size: 29px;
font-weight: 700;
padding-top: 16px;
`
const AdClose = styled.div`
position: absolute;
right: 0;
top: 0;
width: 46px;
height: 46px;
border-bottom-left-radius: 46px;
background: #bdbdbd;
display: flex;
align-items: center;
padding: 0 0 10px 19px;
`
const BottomBar = styled.div`
height: 170px;
display: grid;
grid-template-columns: 264px 206px 206px 206px 206px;
background: #f6f7fa;
`
const IndexBox = styled.div`
display: flex;
flex-direction: column;
align-items: center;
padding-top: 9px;
color: #d02f33;
b{
  font-size: 39px;
  margin-top: 8px;
  letter-spacing: -0.2px;
}
div{
  width: 100%;
  display: flex;
  justify-content: space-between;
  padding: 0 9px 0 38px;
  margin-top: 11px;
}
span{
  font-size: 34.5px;
  color: #666;
}
em{
  font-size: 34.5px;
  letter-spacing: -1px;
}
`
const NavItem = styled.div`
display: flex;
flex-direction: column;
align-items: center;
padding-top: 9px;
color: #666;
font-size: 34px;
span{
  margin-top: 17px;
}
`
